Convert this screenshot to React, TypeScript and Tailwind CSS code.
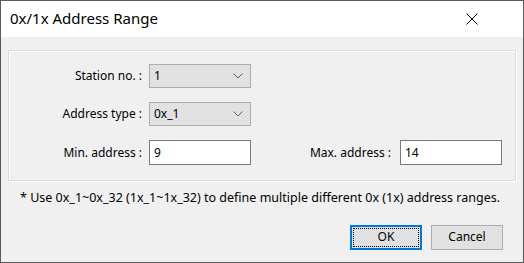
import React from "react";

function Chevron() {
  return (
    <svg width="10" height="6" viewBox="0 0 10 6" className="shrink-0">
      <path d="M0.5 0.5 L5 5 L9.5 0.5" fill="none" stroke="#606060" strokeWidth="1" />
    </svg>
  );
}

function Select({ value }: { value: string }) {
  return (
    <div className="w-[102px] h-[24px] flex items-center justify-between pl-[4px] pr-[7px] bg-[#e1e1e1] border border-[#adadad]">
      <span>{value}</span>
      <Chevron />
    </div>
  );
}

function Input({ value }: { value: string }) {
  return (
    <div className="w-[102px] h-[25px] flex items-center pl-[4px] bg-white border border-[#7a7a7a]">
      {value}
    </div>
  );
}

export default function App() {
  return (
    <div
      className="w-[524px] h-[263px] border border-[#5a5a5a] bg-[#f0f0f0] flex flex-col text-[12px] text-black"
      style={{ fontFamily: '"Noto Sans", "Open Sans", sans-serif' }}
    >
      {/* Title bar */}
      <div className="h-[36px] bg-white flex items-center justify-between pl-[9px] pr-[45px] shrink-0">
        <span className="text-[15px] pb-[1px]">0x/1x Address Range</span>
        <svg width="12" height="12" viewBox="0 0 12 12">
          <path d="M0.5 0.5 L11.5 11.5 M11.5 0.5 L0.5 11.5" stroke="#000" strokeWidth="1" />
        </svg>
      </div>

      {/* Group box */}
      <div className="mt-[13px] ml-[7px] w-[508px] h-[131px] border border-[#dcdcdc] shadow-[inset_1px_1px_0_#fff,1px_1px_0_#fff] flex flex-col gap-[14px] pt-[13px]">
        <div className="flex items-center">
          <span className="w-[140px] text-right pr-[7px]">Station no. :</span>
          <Select value="1" />
        </div>
        <div className="flex items-center">
          <span className="w-[140px] text-right pr-[7px]">Address type :</span>
          <Select value="0x_1" />
        </div>
        <div className="flex items-center">
          <span className="w-[140px] text-right pr-[7px]">Min. address :</span>
          <Input value="9" />
          <span className="w-[149px] text-right pr-[9px]">Max. address :</span>
          <Input value="14" />
        </div>
      </div>

      {/* Note */}
      <div className="mt-[8px] pl-[19px] text-[12.5px]">
        * Use 0x_1~0x_32 (1x_1~1x_32) to define multiple different 0x (1x) address ranges.
      </div>

      {/* Buttons */}
      <div className="mt-[17px] flex justify-end gap-[9px] pr-[20px]">
        <div className="w-[72px] h-[25px] bg-[#e1e1e1] border-2 border-[#0078d7] p-[1px]">
          <div className="w-full h-full border border-dotted border-black flex items-center justify-center">OK</div>
        </div>
        <div className="w-[72px] h-[25px] bg-[#e1e1e1] border border-[#adadad] flex items-center justify-center">Cancel</div>
      </div>
    </div>
  );
}
